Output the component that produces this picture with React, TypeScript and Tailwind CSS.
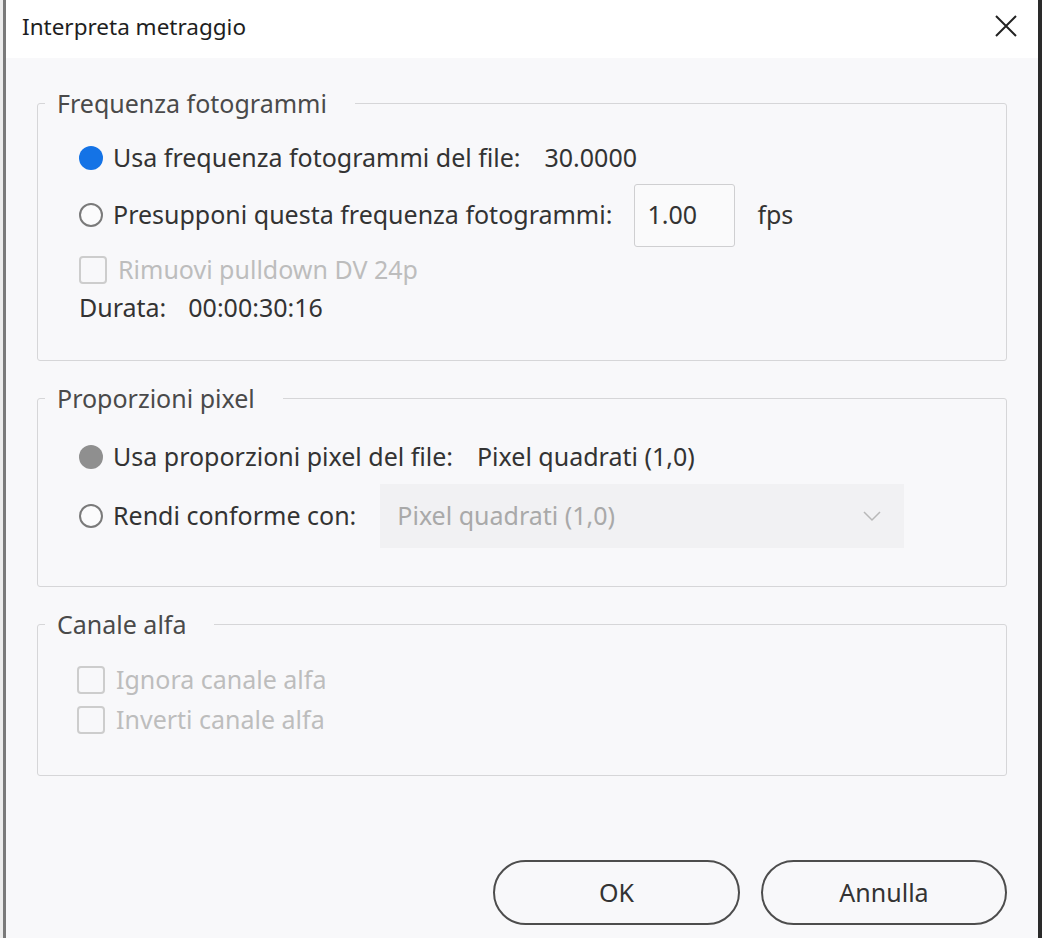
import { ReactNode } from "react";

function Radio({ state }: { state: "blue" | "gray" | "off" }) {
  if (state === "blue") {
    return <span className="w-[24px] h-[24px] rounded-full bg-[#1473e6] shrink-0" />;
  }
  if (state === "gray") {
    return <span className="w-[24px] h-[24px] rounded-full bg-[#8f8f8f] shrink-0" />;
  }
  return <span className="w-[24px] h-[24px] rounded-full border-2 border-[#7a7a7a] bg-[#fbfbfc] shrink-0" />;
}

function Checkbox() {
  return <span className="w-[28px] h-[28px] rounded-[4px] border-2 border-[#cdcdcd] shrink-0" />;
}

function Group({ title, children, className }: { title: string; children: ReactNode; className: string }) {
  return (
    <fieldset className="border border-[#d6d6d8] rounded-[3px]">
      <legend className="ml-[7px] pl-[12px] pr-[28px] text-[25px] leading-[30px] text-[#4a4a4a]">
        {title}
      </legend>
      <div className={className}>{children}</div>
    </fieldset>
  );
}

export default function App() {
  return (
    <div
      className="w-[1042px] h-[938px] bg-[#ececec] pl-[3px] flex"
      style={{ fontFamily: '"Noto Sans", "Open Sans", sans-serif' }}
    >
      <div className="flex-1 flex flex-col border-l-[3px] border-[#7a7a7a] border-r-[4px] border-r-[#2a2a2a] bg-[#f8f8fa]">
        {/* title bar */}
        <div className="h-[58px] bg-white flex items-center justify-between pl-[16px] pr-[20px] shrink-0">
          <span className="text-[22.5px] text-[#1e1e1e] -mt-[4px]">Interpreta metraggio</span>
          <svg width="24" height="24" viewBox="0 0 24 24" className="text-[#222] -mt-[6px]">
            <path d="M2 2 L22 22 M22 2 L2 22" stroke="currentColor" strokeWidth="2" fill="none" />
          </svg>
        </div>

        <div className="flex flex-col pl-[31px] pr-[31px] text-[25px]">
          <div className="mt-[30px]">
            <Group title="Frequenza fotogrammi" className="pl-[41px] pt-[18px] pb-[34px]">
              <div className="h-[44px] flex items-center gap-[10px] text-[#333]">
                <Radio state="blue" />
                <span>Usa frequenza fotogrammi del file:</span>
                <span className="ml-[14px]">30.0000</span>
              </div>
              <div className="h-[70px] flex items-center gap-[10px] text-[#333]">
                <Radio state="off" />
                <span>Presupponi questa frequenza fotogrammi:</span>
                <span className="ml-[12px] w-[101px] h-[63px] border border-[#cfcfd1] rounded-[3px] flex items-center pl-[12px] bg-[#fafafb]">
                  1.00
                </span>
                <span className="ml-[12px]">fps</span>
              </div>
              <div className="h-[40px] flex items-center gap-[11px] text-[#bdbdbd]">
                <Checkbox />
                <span>Rimuovi pulldown DV 24p</span>
              </div>
              <div className="h-[36px] flex items-center gap-[22px] text-[#333]">
                <span>Durata:</span>
                <span>00:00:30:16</span>
              </div>
            </Group>
          </div>

          <div className="mt-[22px]">
            <Group title="Proporzioni pixel" className="pl-[41px] pt-[24px] pb-[38px]">
              <div className="h-[40px] flex items-center gap-[10px] text-[#333]">
                <Radio state="gray" />
                <span>Usa proporzioni pixel del file:</span>
                <span className="ml-[14px]">Pixel quadrati (1,0)</span>
              </div>
              <div className="mt-[7px] h-[64px] flex items-center gap-[10px] text-[#333]">
                <Radio state="off" />
                <span>Rendi conforme con:</span>
                <span className="ml-[14px] w-[524px] h-[64px] bg-[#f1f1f3] flex items-center justify-between pl-[17px] pr-[22px] text-[#a9a9a9]">
                  <span>Pixel quadrati (1,0)</span>
                  <svg width="20" height="12" viewBox="0 0 20 12">
                    <path d="M2 2 L10 10 L18 2" stroke="#b8b8b8" strokeWidth="1.5" fill="none" />
                  </svg>
                </span>
              </div>
            </Group>
          </div>

          <div className="mt-[22px]">
            <Group title="Canale alfa" className="pl-[39px] pt-[21px] pb-[35px]">
              <div className="h-[40px] flex items-center gap-[11px] text-[#bdbdbd]">
                <Checkbox />
                <span>Ignora canale alfa</span>
              </div>
              <div className="h-[40px] flex items-center gap-[11px] text-[#bdbdbd]">
                <Checkbox />
                <span>Inverti canale alfa</span>
              </div>
            </Group>
          </div>

          <div className="mt-[84px] flex justify-end gap-[21px]">
            <button className="w-[247px] h-[65px] rounded-full border-2 border-[#4d4d4d] text-[#333]">
              OK
            </button>
            <button className="w-[246px] h-[65px] rounded-full border-2 border-[#4d4d4d] text-[#333]">
              Annulla
            </button>
          </div>
        </div>
      </div>
    </div>
  );
}
